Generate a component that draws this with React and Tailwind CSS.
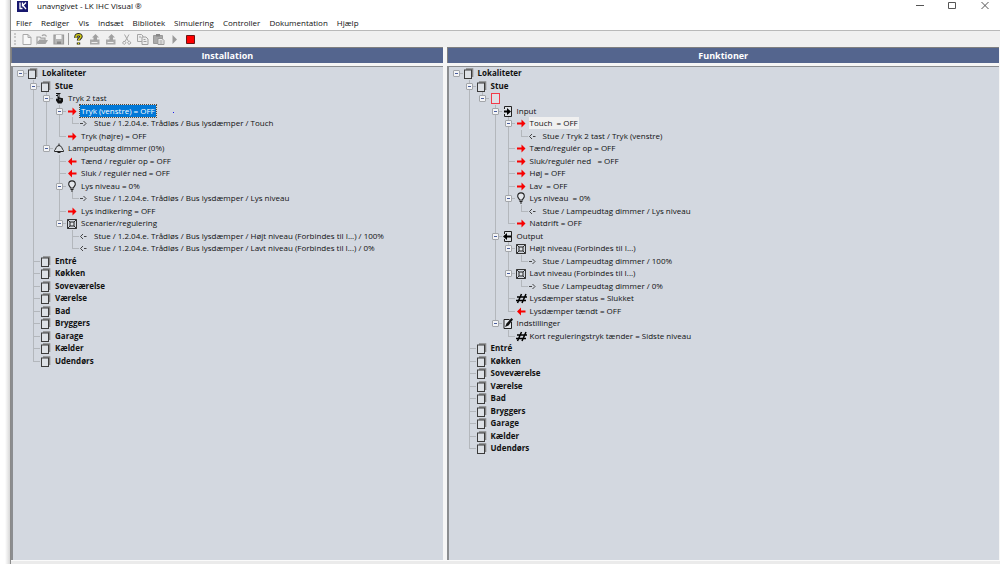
import React, { useState } from 'react';

const installation = [
  {
    id: 'i0', label: 'Lokaliteter', icon: 'place', bold: true, children: [
      {
        id: 'i1', label: 'Stue', icon: 'place', bold: true, children: [
          {
            id: 'i2', label: 'Tryk 2 tast', icon: 'press', children: [
              {
                id: 'i3', label: 'Tryk (venstre) = OFF', icon: 'right', state: 'selected', marked: true, children: [
                  { id: 'i4', label: 'Stue / 1.2.04.e. Trådløs / Bus lysdæmper / Touch', icon: 'linkTo' },
                ],
              },
              { id: 'i5', label: 'Tryk (højre) = OFF', icon: 'right' },
            ],
          },
          {
            id: 'i6', label: 'Lampeudtag dimmer (0%)', icon: 'lamp', children: [
              { id: 'i7', label: 'Tænd / regulér op = OFF', icon: 'left' },
              { id: 'i8', label: 'Sluk / regulér ned = OFF', icon: 'left' },
              {
                id: 'i9', label: 'Lys niveau = 0%', icon: 'bulb', children: [
                  { id: 'i10', label: 'Stue / 1.2.04.e. Trådløs / Bus lysdæmper / Lys niveau', icon: 'linkTo' },
                ],
              },
              { id: 'i11', label: 'Lys indikering = OFF', icon: 'right' },
              {
                id: 'i12', label: 'Scenarier/regulering', icon: 'scene', children: [
                  { id: 'i13', label: 'Stue / 1.2.04.e. Trådløs / Bus lysdæmper / Højt niveau (Forbindes til I...) / 100%', icon: 'linkFrom' },
                  { id: 'i14', label: 'Stue / 1.2.04.e. Trådløs / Bus lysdæmper / Lavt niveau (Forbindes til I...) / 0%', icon: 'linkFrom' },
                ],
              },
            ],
          },
        ],
      },
      { id: 'i15', label: 'Entré', icon: 'place', bold: true },
      { id: 'i16', label: 'Køkken', icon: 'place', bold: true },
      { id: 'i17', label: 'Soveværelse', icon: 'place', bold: true },
      { id: 'i18', label: 'Værelse', icon: 'place', bold: true },
      { id: 'i19', label: 'Bad', icon: 'place', bold: true },
      { id: 'i20', label: 'Bryggers', icon: 'place', bold: true },
      { id: 'i21', label: 'Garage', icon: 'place', bold: true },
      { id: 'i22', label: 'Kælder', icon: 'place', bold: true },
      { id: 'i23', label: 'Udendørs', icon: 'place', bold: true },
    ],
  },
];

const functions = [
  {
    id: 'f0', label: 'Lokaliteter', icon: 'place', bold: true, children: [
      {
        id: 'f1', label: 'Stue', icon: 'place', bold: true, children: [
          {
            id: 'f2', label: '', icon: 'block', children: [
              {
                id: 'f3', label: 'Input', icon: 'input', children: [
                  {
                    id: 'f4', label: 'Touch  = OFF', icon: 'right', state: 'linked', children: [
                      { id: 'f5', label: 'Stue / Tryk 2 tast / Tryk (venstre)', icon: 'linkFrom' },
                    ],
                  },
                  { id: 'f6', label: 'Tænd/regulér op = OFF', icon: 'right' },
                  { id: 'f7', label: 'Sluk/regulér ned   = OFF', icon: 'right' },
                  { id: 'f8', label: 'Høj = OFF', icon: 'right' },
                  { id: 'f9', label: 'Lav  = OFF', icon: 'right' },
                  {
                    id: 'f10', label: 'Lys niveau  = 0%', icon: 'bulb', children: [
                      { id: 'f11', label: 'Stue / Lampeudtag dimmer / Lys niveau', icon: 'linkFrom' },
                    ],
                  },
                  { id: 'f12', label: 'Natdrift = OFF', icon: 'right' },
                ],
              },
              {
                id: 'f13', label: 'Output', icon: 'output', children: [
                  {
                    id: 'f14', label: 'Højt niveau (Forbindes til I...)', icon: 'scene', children: [
                      { id: 'f15', label: 'Stue / Lampeudtag dimmer / 100%', icon: 'linkTo' },
                    ],
                  },
                  {
                    id: 'f16', label: 'Lavt niveau (Forbindes til I...)', icon: 'scene', children: [
                      { id: 'f17', label: 'Stue / Lampeudtag dimmer / 0%', icon: 'linkTo' },
                    ],
                  },
                  { id: 'f18', label: 'Lysdæmper status = Slukket', icon: 'hash' },
                  { id: 'f19', label: 'Lysdæmper tændt = OFF', icon: 'left' },
                ],
              },
              {
                id: 'f20', label: 'Indstillinger', icon: 'settings', children: [
                  { id: 'f21', label: 'Kort reguleringstryk tænder = Sidste niveau', icon: 'hash' },
                ],
              },
            ],
          },
        ],
      },
      { id: 'f22', label: 'Entré', icon: 'place', bold: true },
      { id: 'f23', label: 'Køkken', icon: 'place', bold: true },
      { id: 'f24', label: 'Soveværelse', icon: 'place', bold: true },
      { id: 'f25', label: 'Værelse', icon: 'place', bold: true },
      { id: 'f26', label: 'Bad', icon: 'place', bold: true },
      { id: 'f27', label: 'Bryggers', icon: 'place', bold: true },
      { id: 'f28', label: 'Garage', icon: 'place', bold: true },
      { id: 'f29', label: 'Kælder', icon: 'place', bold: true },
      { id: 'f30', label: 'Udendørs', icon: 'place', bold: true },
    ],
  },
];

const menus = ['Filer', 'Rediger', 'Vis', 'Indsæt', 'Bibliotek', 'Simulering', 'Controller', 'Dokumentation', 'Hjælp'];

const nodeIcons = {
  place: (
    <>
      <path d="M3 2H9.500V10" fill="none" stroke="#858585" strokeWidth="1.600" />
      <rect x="1.500" y="3" width="7" height="8.500" fill="#dde1e6" stroke="#3c3c3c" />
    </>
  ),
  block: <rect x="2.500" y="1.500" width="8" height="10" fill="#dfdfe5" stroke="#f23a48" />,
  press: (
    <>
      <path d="M3 1.500H7.500M3 3.500H5" stroke="#111" strokeWidth="1.200" fill="none" />
      <path d="M4.500 1.500h2v4l3.500 .8v3.200L8.500 11.500H5L3 8.500V6.500l1.500 .5z" fill="#111" />
      <path d="M5.500 2.500v2M7 7v1.500" stroke="#d3d8e0" strokeWidth=".7" />
    </>
  ),
  right: <path d="M2 5.500h4.500V2.500L10.500 6.500 6.500 10.500V7.500H2z" fill="#f80000" />,
  left: <path d="M10.500 5.500H6V2.500L2 6.500l4 4V7.500H10.500z" fill="#f80000" />,
  linkTo: <path d="M1 6.500h3M4.500 4L7 6.500 4.500 9" fill="none" stroke="#333" strokeWidth=".9" />,
  linkFrom: <path d="M7.500 6.500H5M4 4L1.500 6.500 4 9" fill="none" stroke="#333" strokeWidth=".9" />,
  lamp: (
    <>
      <path d="M1.500 9.500L1.500 8.500C3 7.500 3 3.500 6 3.500S9 7.500 10.500 8.500V9.500Z" fill="#dde1e6" stroke="#222" />
      <path d="M6 3.500V1.500M4.500 10.500h3" fill="none" stroke="#222" />
    </>
  ),
  bulb: (
    <>
      <path d="M4.500 8C4.500 6.500 2.700 6 2.700 4.200a3.300 3.300 0 0 1 6.600 0C9.300 6 7.500 6.500 7.500 8z" fill="#e4e7ec" stroke="#222" strokeWidth="1.100" />
      <path d="M4.500 9.500h3M5 11h2" stroke="#222" strokeWidth="1" />
    </>
  ),
  scene: (
    <>
      <path d="M1.500 2.500h9v9h-9zM1.500 2.500l9 9M10.500 2.500l-9 9" fill="none" stroke="#333" />
      <rect x="4" y="5" width="4" height="4" fill="#dde1e6" stroke="#222" />
    </>
  ),
  input: (
    <>
      <path d="M2.500 4V1.500H9.500v10H2.500V9" fill="#dde1e6" stroke="#222" />
      <path d="M2 5.500h3V3L9 6.500 5 10V7.500H2z" fill="#000" />
    </>
  ),
  output: (
    <>
      <path d="M2.500 4V1.500h7v10h-7V9" fill="#dde1e6" stroke="#222" />
      <path d="M9 5.500H5V3L1 6.500 5 10V7.500H9z" fill="#000" />
    </>
  ),
  hash: <path d="M2 5h10M1 8.500h10M6.500 2L2.500 11M11 2L7 11" fill="none" stroke="#000" strokeWidth="1.500" />,
  settings: (
    <>
      <path d="M7.500 2.500H2V11.500H9.500V5" fill="#e4e7ec" stroke="#222" />
      <path d="M3 10L4.500 6.500 9.500 1l1.500 1.500L6.500 8.500z" fill="#111" />
    </>
  ),
};

const toolIcons = {
  Ny: <path d="M3 1.500h5L11 4.500v7H3zM8 1.500v3h3" fill="#f8f8f8" stroke="#a8a8a8" />,
  Åbn: (
    <>
      <path d="M1 10.500V4h3l1 1.200h4V7H4zM6 3C7 1.500 9.500 1.500 10.500 3.500" fill="none" stroke="#a3a3a3" strokeWidth="1.200" />
      <path d="M4 7h8l-2.500 4H1.500z" fill="#a3a3a3" />
    </>
  ),
  Gem: (
    <>
      <path d="M2 2h9.500v9H2z" fill="#b5b5b5" stroke="#999" strokeWidth="1.200" />
      <path d="M4 2h5.500v4H4z" fill="#f4f4f4" />
      <path d="M5 8.500h4V11H5z" fill="#888" />
    </>
  ),
  Hjælp: (
    <>
      <path d="M4 5V3.500C4 1.200 9 1.200 9 3.500 9 5.200 6.500 5 6.500 7.500M6.500 9.500v2" fill="none" stroke="#222" strokeWidth="3.400" />
      <path d="M4 5V3.500C4 1.200 9 1.200 9 3.500 9 5.200 6.500 5 6.500 7.500M6.500 9.700v1.500" fill="none" stroke="#d6cf18" strokeWidth="1.500" />
    </>
  ),
  Hent: (
    <>
      <path d="M2 6.500h9.500V11.500H2z" fill="#aaa" />
      <path d="M5.500 7.500V4.500H4L7.500 1 11 4.500H9v3z" fill="#a0a0a0" />
      <path d="M3.500 9.500h6" stroke="#eee" />
    </>
  ),
  Klip: (
    <path d="M4.500 1.500L8.500 8.500M9 1.500L5 8.500M5 8.500a1.300 1.300 0 1 0-1.500 2.500A1.300 1.300 0 0 0 5 8.500M8.500 8.500A1.300 1.300 0 1 0 10 11a1.300 1.300 0 0 0-1.500-2.500" fill="none" stroke="#a5a5a5" />
  ),
  Kopier: (
    <>
      <path d="M1.500 1.500h4l1.500 1.500v5.500H1.500zM3 4h2" fill="#eee" stroke="#a5a5a5" />
      <path d="M6 4h4l2 2v5.500H6zM7.500 6.500h2M7.500 8.500h3" fill="#eee" stroke="#a0a0a0" />
    </>
  ),
  'Sæt ind': (
    <>
      <path d="M1.500 2.500h9V10.500h-9z" fill="#aaa" stroke="#999" />
      <path d="M4 1h4v2.500H4z" fill="#888" />
      <path d="M6 5.500h4l2 2v4H6zM7.500 8h3M7.500 10h3" fill="#eee" stroke="#999" />
    </>
  ),
  Start: <path d="M4.500 2v9L9 6.500z" fill="#9a9a9a" />,
  Stop: <path d="M2.500 2.500h8v8h-8z" fill="#f00" stroke="#6a1515" />,
};

const tools = [
  { id: 'new', icon: 'Ny' },
  { id: 'open', icon: 'Åbn' },
  { id: 'save', icon: 'Gem' },
  { id: 'divider' },
  { id: 'help', icon: 'Hjælp' },
  { id: 'read', icon: 'Hent' },
  { id: 'send', icon: 'Hent' },
  { id: 'cut', icon: 'Klip' },
  { id: 'copy', icon: 'Kopier' },
  { id: 'paste', icon: 'Sæt ind' },
  { id: 'start', icon: 'Start' },
  { id: 'stop', icon: 'Stop' },
];

// lines[k] tells whether the guide in column k goes on below the row
const flatten = (nodes, collapsed, lines = []) =>
  nodes.flatMap((node, i) => {
    const last = i === nodes.length - 1;
    const row = { node, lines, last };
    if (!node.children || collapsed[node.id]) return [row];
    return [row, ...flatten(node.children, collapsed, [...lines, !last])];
  });

const labelStyles = {
  selected: 'bg-[#0078d7] text-white outline outline-1 outline-dotted outline-[#5a4a35]',
  linked: 'bg-[#f0f0f0]',
};

const TreeRow = ({ row, open, onToggle }) => {
  const { node, lines, last } = row;
  const root = lines.length === 0;
  return (
    <li role="treeitem" aria-level={lines.length + 1} aria-selected={node.state === 'selected'} className="flex odd:h-[13px] even:h-[12px]">
      {lines.map((on, k) => (
        <span key={k} className="w-[13px] shrink-0 pl-[6px] flex">
          {on && <span className="border-l border-[#b3b7bc]" />}
        </span>
      ))}
      <span className="relative w-[13px] shrink-0 pl-[6px] flex flex-col">
        <span className={`h-[7px] border-b border-[#b3b7bc] ${root ? '' : 'border-l'}`} />
        {!last && <span className="flex-1 border-l border-[#b3b7bc]" />}
        {node.children && (
          <button
            type="button"
            aria-label={`${open ? 'Luk' : 'Åbn'} ${node.label}`}
            onClick={onToggle}
            className="absolute left-[3px] top-[3px] size-[7px] border border-[#a3a6aa] rounded-[1px] bg-[#f3f4f6] flex items-center justify-center"
          >
            <span className="w-[3px] h-px bg-[#4a5f9e]" />
          </button>
        )}
      </span>
      <svg viewBox="0 0 13 12" className="w-[13px] h-[12px] shrink-0" aria-hidden="true">{nodeIcons[node.icon]}</svg>
      {node.label && (
        <span className={`ml-px px-px h-[12px] leading-[12px] whitespace-pre ${node.bold ? 'font-bold' : ''} ${labelStyles[node.state] || ''}`}>
          {node.label}
        </span>
      )}
      {node.marked && <span className="ml-[17px] mt-[7px] size-px bg-[#1a1af0]" />}
    </li>
  );
};

const TreePanel = ({ title, nodes }) => {
  const [collapsed, setCollapsed] = useState({});
  const toggle = (id) => setCollapsed((prev) => ({ ...prev, [id]: !prev[id] }));

  return (
    <section className="flex flex-col min-w-0">
      <h2 className="h-[16px] border-t border-l border-[#808080] bg-[#54658e] text-white text-[9px] leading-[16px] font-bold text-center">{title}</h2>
      <div className="mt-[3px] flex-1 border-t border-l-2 border-[#8b8d90] bg-[#d3d8e0] overflow-hidden">
        <ul role="tree" aria-label={title} className="pl-px text-[8px] text-[#111]">
          {flatten(nodes, collapsed).map((row) => (
            <TreeRow key={row.node.id} row={row} open={!collapsed[row.node.id]} onToggle={() => toggle(row.node.id)} />
          ))}
        </ul>
      </div>
    </section>
  );
};

const App = () => {
  return (
    <div className="min-h-screen flex bg-white font-['Open_Sans','Noto_Sans',sans-serif] text-[#111]">
      <div className="w-[11px] shrink-0 border-r border-[#8a8a8a] bg-gradient-to-r from-white from-50% to-[#d8d8d8]" />
      <div className="flex-1 min-w-0 flex flex-col">
        <header className="h-[14px] flex items-start justify-between">
          <div className="flex items-center gap-[9px] pl-[6px]">
            <svg viewBox="0 0 11 11" className="w-[11px] h-[11px]" aria-hidden="true">
              <path d="M0 0h11v11H0z" fill="#17176e" />
              <path d="M3 1.500v6h2.500M5.500 1.500v4M9 1.500L6 4.500 9 8" fill="none" stroke="#fff" strokeWidth="1.300" />
            </svg>
            <h1 className="text-[8px] leading-[12px]">unavngivet - LK IHC Visual ®</h1>
          </div>
          <div className="flex gap-[20px] pr-[9px]">
            <button type="button" aria-label="Minimer"><svg viewBox="0 0 12 12" className="size-[12px]"><path d="M1 5.500h8" stroke="#555" /></svg></button>
            <button type="button" aria-label="Maksimer"><svg viewBox="0 0 12 12" className="size-[12px]"><path d="M1.500 2.500h7v6h-7z" fill="none" stroke="#555" /></svg></button>
            <button type="button" aria-label="Luk"><svg viewBox="0 0 12 12" className="size-[12px]"><path d="M2.500 2l7 7M9.500 2l-7 7" stroke="#555" /></svg></button>
          </div>
        </header>
        <nav className="h-[16px] flex items-center gap-[9px] pl-[5px] pt-px text-[8px] leading-[14px]">
          {menus.map((menu) => (
            <button key={menu} type="button">{menu}</button>
          ))}
        </nav>
        <div role="toolbar" aria-label="Værktøjslinje" className="h-[17px] border-t border-[#b9b9b9] bg-[#f0f0f0] flex items-center gap-[3px] pl-[3px]">
          <span className="h-[12px] border-l-2 border-dotted border-[#c8c8c8] mr-[1px]" />
          {tools.map((tool) =>
            tool.icon ? (
              <button key={tool.id} type="button" aria-label={tool.icon}>
                <svg viewBox="0 0 13 13" className="size-[13px]">{toolIcons[tool.icon]}</svg>
              </button>
            ) : (
              <span key={tool.id} className="w-px h-[12px] bg-[#999]" />
            )
          )}
        </div>
        <main className="flex-1 grid grid-cols-[432fr_553fr] gap-x-[4px] pr-px bg-[#f6f6f6]">
          <TreePanel title="Installation" nodes={installation} />
          <TreePanel title="Funktioner" nodes={functions} />
        </main>
        <footer className="h-[4px] bg-[#ebebeb] border-t border-[#fafafa]" />
      </div>
    </div>
  );
};

export default App;
